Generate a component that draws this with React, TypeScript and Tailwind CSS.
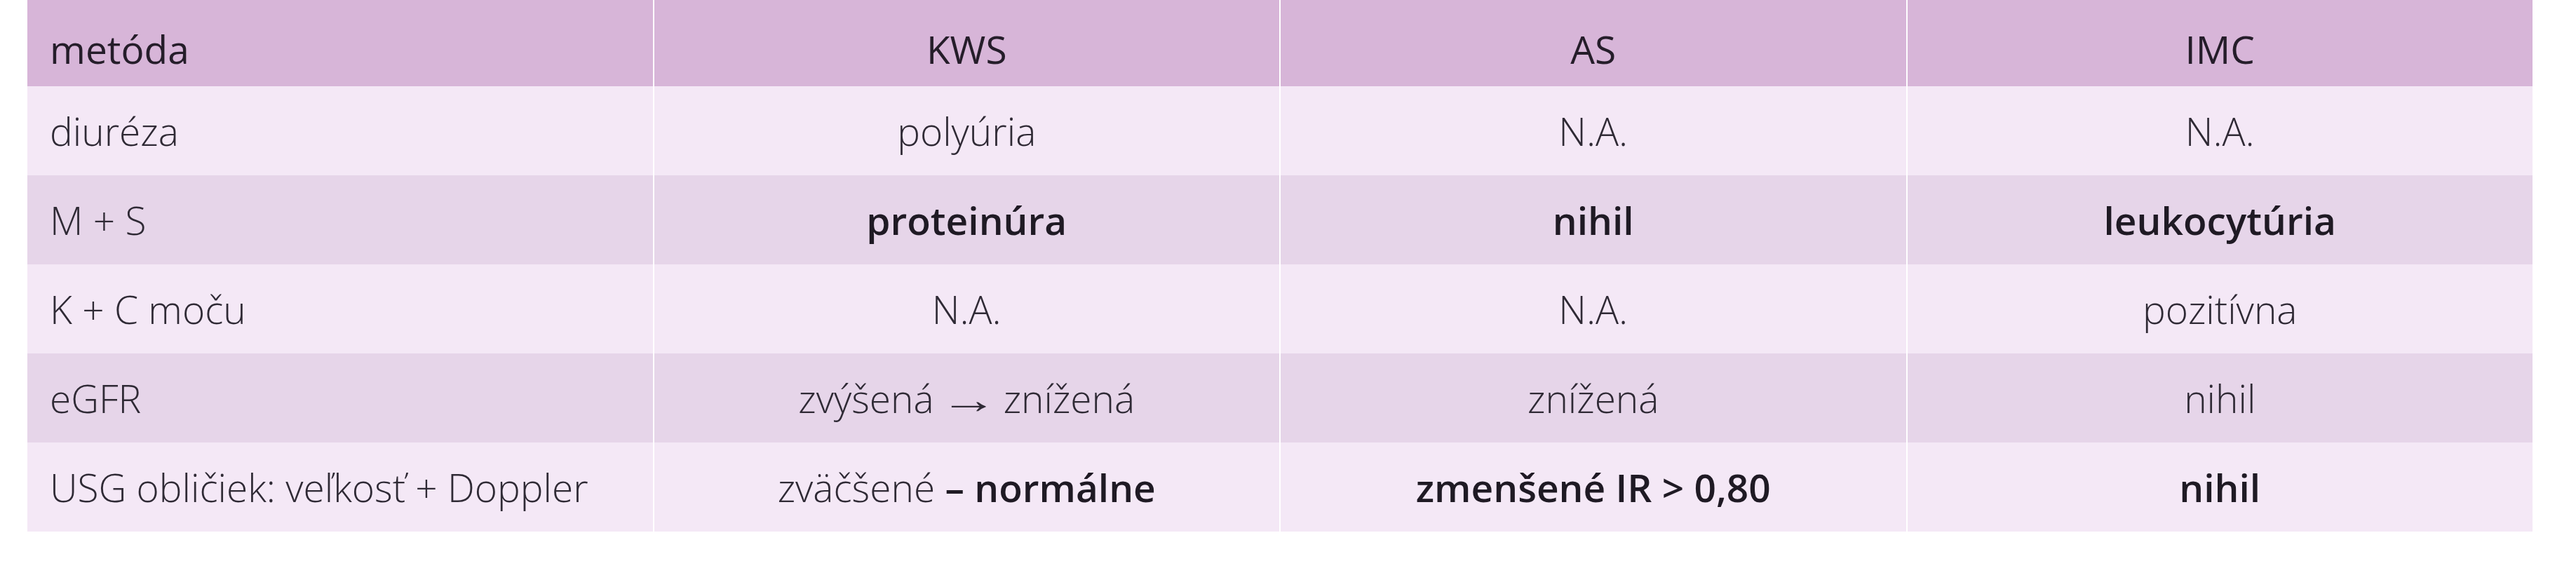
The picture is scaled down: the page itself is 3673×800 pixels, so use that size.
import React from "react";

type Cell = React.ReactNode;

const header = ["metóda", "KWS", "AS", "IMC"];

const B = ({ children }: { children: React.ReactNode }) => (
  <span className="font-semibold text-[#1f1a24]">{children}</span>
);

const rows: { label: string; cells: Cell[]; bg: string }[] = [
  {
    label: "diuréza",
    cells: ["polyúria", "N.A.", "N.A."],
    bg: "bg-[#f4e8f6]",
  },
  {
    label: "M + S",
    cells: [<B>proteinúra</B>, <B>nihil</B>, <B>leukocytúria</B>],
    bg: "bg-[#e6d5e9]",
  },
  {
    label: "K + C moču",
    cells: ["N.A.", "N.A.", "pozitívna"],
    bg: "bg-[#f4e8f6]",
  },
  {
    label: "eGFR",
    cells: [
      <span>
        zvýšená<span className="mx-[22px] inline-block scale-x-150">→</span>znížená
      </span>,
      "znížená",
      "nihil",
    ],
    bg: "bg-[#e6d5e9]",
  },
  {
    label: "USG obličiek: veľkosť + Doppler",
    cells: [
      <span>
        zväčšené <B>– normálne</B>
      </span>,
      <B>zmenšené IR &gt; 0,80</B>,
      <B>nihil</B>,
    ],
    bg: "bg-[#f4e8f6]",
  },
];

export default function App() {
  return (
    <div
      className="min-h-[800px] w-[3673px] bg-white"
      style={{ fontFamily: '"Open Sans", "Noto Sans", sans-serif' }}
    >
      <div className="ml-[39px] grid w-[3572px] grid-cols-4 gap-x-[2px] bg-white text-[55px] leading-none font-light text-[#2f2a35]">
        {header.map((h, i) => (
          <div
            key={h}
            className={`flex h-[123px] items-center bg-[#d7b5d8] pt-[16px] font-medium text-[#251d2a] ${
              i === 0 ? "justify-start pl-[32px]" : "justify-center"
            }`}
          >
            {h}
          </div>
        ))}
        {rows.map((r) => (
          <React.Fragment key={r.label}>
            <div className={`flex h-[127px] items-center pl-[32px] ${r.bg}`}>
              {r.label}
            </div>
            {r.cells.map((c, j) => (
              <div
                key={j}
                className={`flex h-[127px] items-center justify-center ${r.bg}`}
              >
                {c}
              </div>
            ))}
          </React.Fragment>
        ))}
      </div>
    </div>
  );
}
